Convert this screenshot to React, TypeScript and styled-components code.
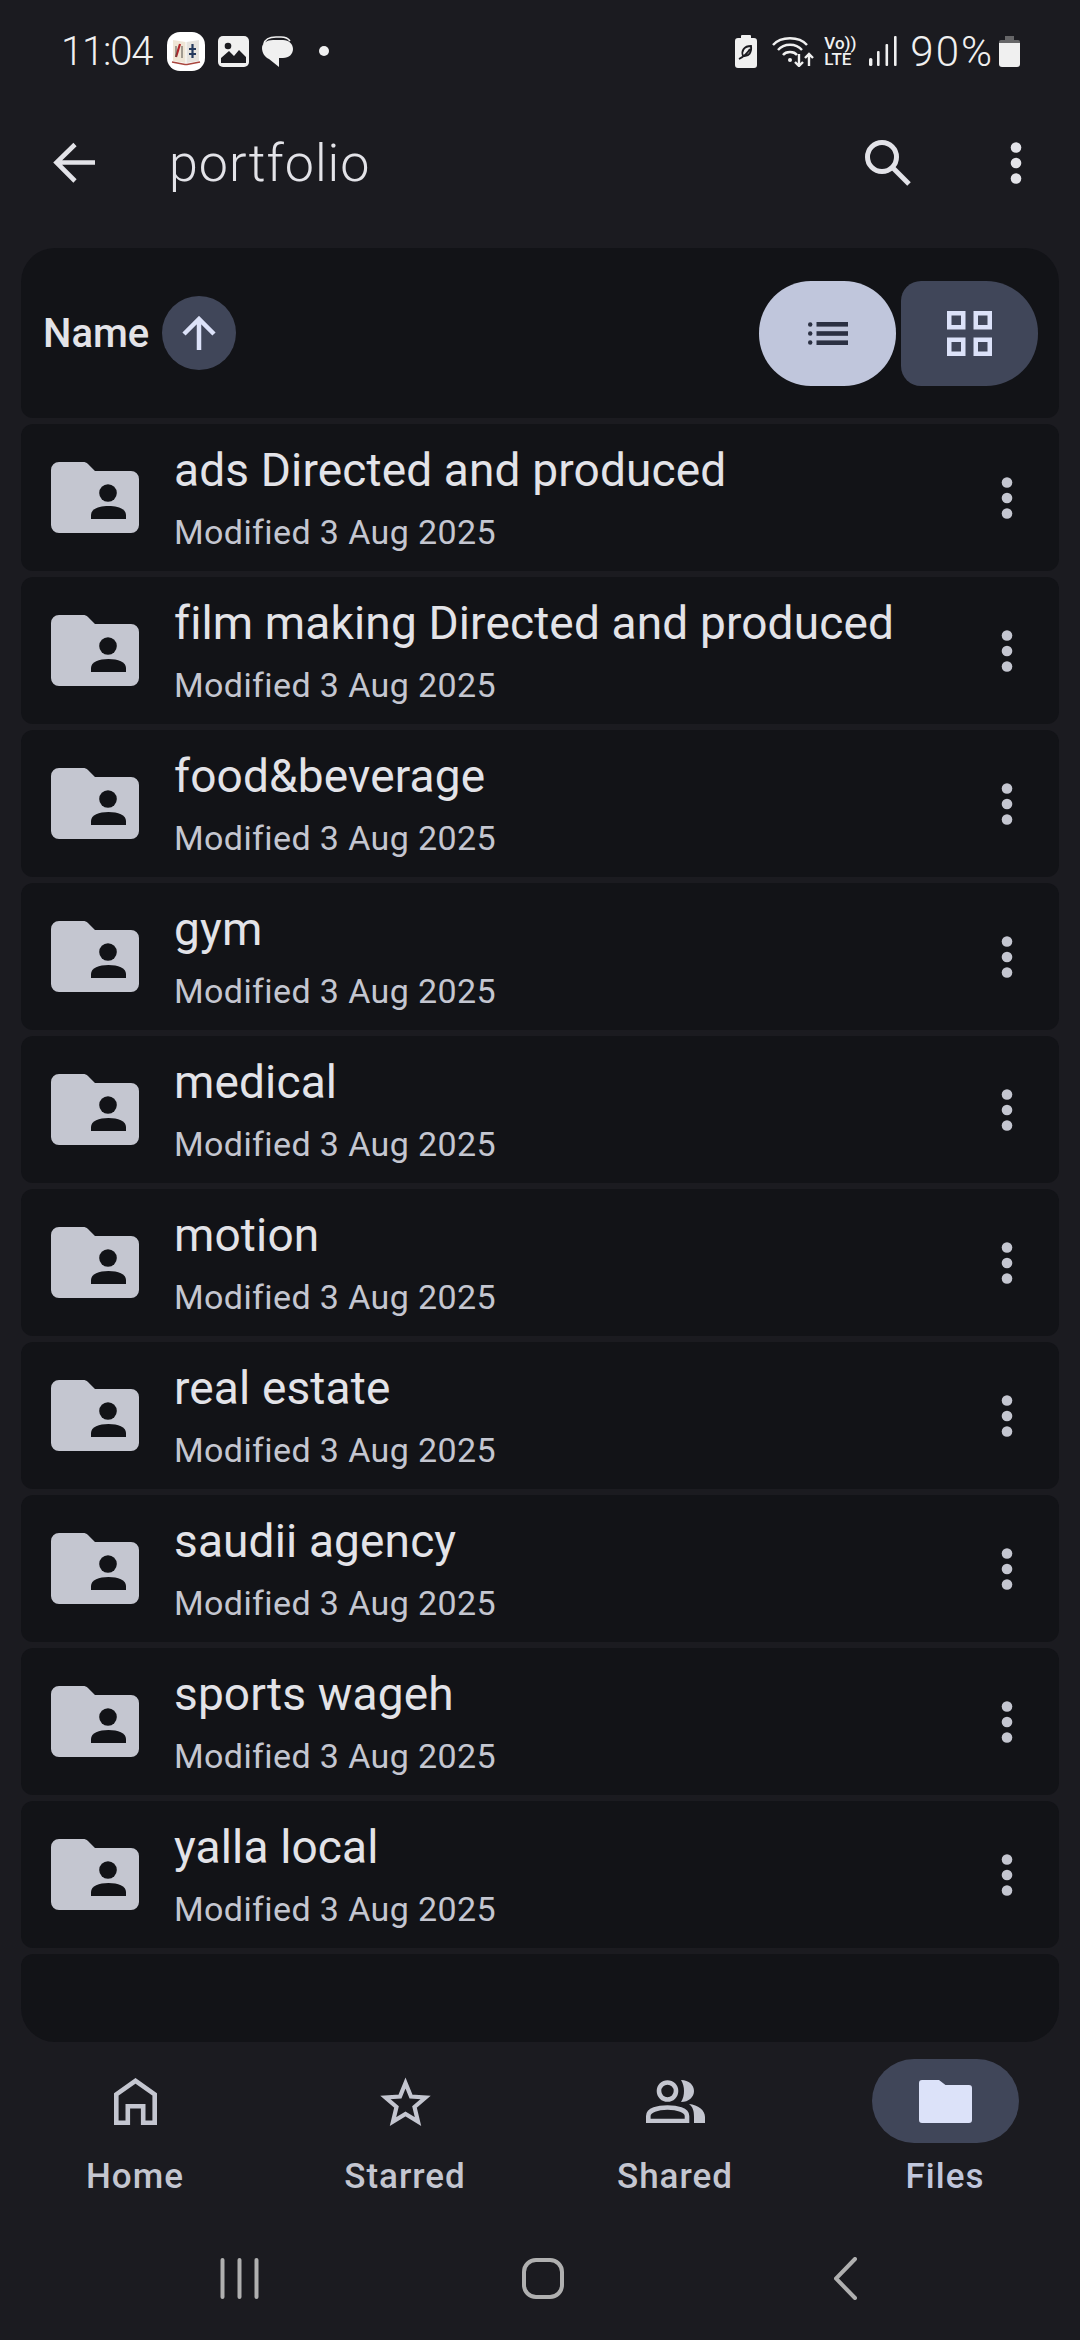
import styled, { createGlobalStyle } from "styled-components";

const GlobalStyle = createGlobalStyle`
	html, body {
		margin: 0;
		padding: 0;
		background: #1b1b20;
	}
	* {
		box-sizing: border-box;
	}
`;

const folders = [
	"ads Directed and produced",
	"film making Directed and produced",
	"food&beverage",
	"gym",
	"medical",
	"motion",
	"real estate",
	"saudii agency",
	"sports wageh",
	"yalla local",
];

const BackIcon = () => (
	<svg width="42" height="42" viewBox="0 0 42 42" fill="none" stroke="#e3e3e8" strokeWidth="4.6">
		<path d="M42 20.500H4M22 2.500 3.500 20.500 22 39" />
	</svg>
);

const SearchIcon = () => (
	<svg width="46" height="46" viewBox="0 0 46 46" fill="none" stroke="#e3e3e8" strokeWidth="5">
		<circle cx="17" cy="17" r="14.500" />
		<path d="M27.500 27.500 44 44" />
	</svg>
);

const KebabIcon = ({ color }: { color: string }) => (
	<svg width="12" height="42" viewBox="0 0 12 42" fill={color}>
		<circle cx="6" cy="5.500" r="5.300" />
		<circle cx="6" cy="21" r="5.300" />
		<circle cx="6" cy="36.500" r="5.300" />
	</svg>
);

const SharedFolderIcon = () => (
	<svg width="88" height="71" viewBox="0 0 88 71">
		<path
			d="M8 0H32C34 0 35.500 .6 37 2L44 9H80A8 8 0 0 1 88 17V63A8 8 0 0 1 80 71H8A8 8 0 0 1 0 63V8A8 8 0 0 1 8 0Z"
			fill="#c4c6d0"
		/>
		<circle cx="57" cy="31" r="8.800" fill="#121317" />
		<path d="M40 57V53C40 47 48 44 57.500 44S75 47 75 53V57Z" fill="#121317" />
	</svg>
);

const SortArrowIcon = () => (
	<svg width="34" height="34" viewBox="0 0 34 34" fill="none" stroke="#dce2f9" strokeWidth="4.500">
		<path d="M17 34V3M2 18 17 3 32 18" />
	</svg>
);

const ListIcon = () => (
	<svg width="40" height="23" viewBox="0 0 40 23" fill="#2b3042">
		<circle cx="2.200" cy="2.500" r="2.200" />
		<circle cx="2.200" cy="11.500" r="2.200" />
		<circle cx="2.200" cy="20.500" r="2.200" />
		<rect x="8.500" y="0" width="31.500" height="4.600" />
		<rect x="8.500" y="9.200" width="31.500" height="4.600" />
		<rect x="8.500" y="18.400" width="31.500" height="4.600" />
	</svg>
);

const GridIcon = () => (
	<svg width="45" height="45" viewBox="0 0 45 45" fill="none" stroke="#dce2f9" strokeWidth="4.500">
		<rect x="2.250" y="2.250" width="14" height="14" />
		<rect x="28.750" y="2.250" width="14" height="14" />
		<rect x="2.250" y="28.750" width="14" height="14" />
		<rect x="28.750" y="28.750" width="14" height="14" />
	</svg>
);

const HomeIcon = () => (
	<svg width="43" height="47" viewBox="0 0 43 47" fill="none" stroke="#c4c6d0" strokeWidth="4.600">
		<path d="M2.300 44.700V16.500L21.500 2.800 40.700 16.500V44.700H29.200V28.300H13.800V44.700Z" />
	</svg>
);

const StarIcon = () => (
	<svg width="51" height="49" viewBox="0 0 51 49" fill="none" stroke="#c4c6d0" strokeWidth="4.200">
		<path d="M25.500 6 31 19.500 45.500 20.500 34.500 30 38 44.500 25.500 37 13 44.500 16.500 30 5.500 20.500 20 19.500Z" />
	</svg>
);

const SharedIcon = () => (
	<svg width="59" height="43" viewBox="0 0 59 43" fill="none">
		<circle cx="21.500" cy="11" r="8.500" stroke="#c4c6d0" strokeWidth="4.600" />
		<path d="M2.300 41V36C2.300 30 12 27.500 21.500 27.500S41 30 41 36V41Z" stroke="#c4c6d0" strokeWidth="4.600" />
		<path d="M35 0C43 0 48 5 48 11S43 22 35 22C39 16 39 6 35 0Z" fill="#c4c6d0" />
		<path d="M43 24C52 25 59 30 59 37V43H48V37C48 31 47 27 43 24Z" fill="#c4c6d0" />
	</svg>
);

const FilesIcon = () => (
	<svg width="53" height="43" viewBox="0 0 53 43" fill="#dce2f9">
		<path d="M3 0H20L26.500 5H50A3 3 0 0 1 53 8V40A3 3 0 0 1 50 43H3A3 3 0 0 1 0 40V3A3 3 0 0 1 3 0Z" />
	</svg>
);

const AppBadgeIcon = () => (
	<svg width="38" height="39" viewBox="0 0 38 39">
		<rect width="38" height="39" rx="13" fill="#ffffff" />
		<path d="M6 8 18.500 10V31L6 29Z" fill="#efe6d6" />
		<path d="M32 8 19.500 10V31L32 29Z" fill="#e6e3de" />
		<path d="M13 12 9 25" stroke="#b3262b" strokeWidth="2.200" />
		<path d="M9 14V25M15 14V26" stroke="#55504a" strokeWidth="1" />
		<path d="M25.500 12V26M22 17H29M22 22H29" stroke="#253a5e" strokeWidth="2.200" />
		<path d="M5 30 18 32.500H20L33 30" stroke="#a9463d" strokeWidth="1.500" fill="none" />
	</svg>
);

const GalleryIcon = () => (
	<svg width="31" height="31" viewBox="0 0 31 31">
		<rect width="31" height="31" rx="5" fill="#f0f0f0" />
		<circle cx="10" cy="10" r="3.300" fill="#1b1b20" />
		<path d="M3 27V22L11 15 16 20 21 14 28 21V27Z" fill="#1b1b20" />
	</svg>
);

const ChatIcon = () => (
	<svg width="31" height="31" viewBox="0 0 31 31">
		<path d="M2 8C3 3 8 1 14 1H19C23 1 26 2 28 5" fill="none" stroke="#f0f0f0" strokeWidth="1.600" />
		<path d="M0 12C0 7 5 4 11 4H21C27 4 31 8 31 13S27 22 21 22H17V31L7 23C3 21 0 17 0 12Z" fill="#f0f0f0" />
	</svg>
);

const LeafBatteryIcon = () => (
	<svg width="22" height="33" viewBox="0 0 22 33">
		<path d="M7 0H15A1 1 0 0 1 16 1V3H19A3 3 0 0 1 22 6V30A3 3 0 0 1 19 33H3A3 3 0 0 1 0 30V6A3 3 0 0 1 3 3H6V1A1 1 0 0 1 7 0Z" fill="#f0f0f0" />
		<path d="M4 24C8 22 12 19 15 14M8 21C6 16 9 11 16 11 17 17 14 22 8 21Z" fill="none" stroke="#1b1b20" strokeWidth="1.800" />
	</svg>
);

const WifiIcon = () => (
	<svg width="42" height="32" viewBox="0 0 42 32" fill="none" stroke="#f0f0f0" strokeWidth="2.400">
		<path d="M1 10C9 1 27 1 35 10M6 15C12 8 24 8 30 15M11 20C14 16 22 16 25 20" />
		<circle cx="18" cy="25" r="2" fill="#f0f0f0" stroke="none" />
		<path d="M27 19V31M23 27 27 31 31 27M37 31V19M33 23 37 19 41 23" />
	</svg>
);

const SignalIcon = () => (
	<svg width="28" height="30" viewBox="0 0 28 30" fill="#f0f0f0">
		<rect x="0" y="22" width="3.400" height="8" rx="1.500" />
		<rect x="8" y="15" width="2.600" height="15" rx="1" />
		<rect x="16.500" y="8" width="2.600" height="22" rx="1" />
		<rect x="25" y="0" width="2.600" height="30" rx="1" />
	</svg>
);

const BatteryIcon = () => (
	<svg width="21" height="31" viewBox="0 0 21 31">
		<path d="M6 0H15V4H6Z" fill="#666668" />
		<path d="M2 4H19A2 2 0 0 1 21 6V7H0V6A2 2 0 0 1 2 4Z" fill="#666668" />
		<path d="M0 7H21V28A3 3 0 0 1 18 31H3A3 3 0 0 1 0 28Z" fill="#f0f0f0" />
	</svg>
);

const RecentsIcon = () => (
	<svg width="39" height="41" viewBox="0 0 39 41" fill="none" stroke="#b0b0b0" strokeWidth="4" strokeLinecap="round">
		<path d="M2.500 2V39M19.500 2V39M36.500 2V39" />
	</svg>
);

const HomeSquareIcon = () => (
	<svg width="42" height="41" viewBox="0 0 42 41" fill="none" stroke="#b0b0b0" strokeWidth="4">
		<rect x="2" y="2" width="38" height="37" rx="12" />
	</svg>
);

const BackChevronIcon = () => (
	<svg width="23" height="43" viewBox="0 0 23 43" fill="none" stroke="#b0b0b0" strokeWidth="4" strokeLinecap="round">
		<path d="M21 2 2 21.500 21 41" />
	</svg>
);

export default function App() {
	return (
		<StyledPage>
			<GlobalStyle />
			<StyledStatusBar>
				<StyledStatusLeft>
					<StyledClock>11:04</StyledClock>
					<AppBadgeIcon />
					<GalleryIcon />
					<ChatIcon />
					<StyledNotificationDot />
				</StyledStatusLeft>
				<StyledStatusRight>
					<LeafBatteryIcon />
					<WifiIcon />
					<StyledVolte>
						<span>Vo))</span>
						<span>LTE</span>
					</StyledVolte>
					<SignalIcon />
					<StyledBatteryText>90%</StyledBatteryText>
					<BatteryIcon />
				</StyledStatusRight>
			</StyledStatusBar>

			<StyledToolbar>
				<BackIcon />
				<StyledToolbarTitle>portfolio</StyledToolbarTitle>
				<SearchIcon />
				<KebabIcon color="#e3e3e8" />
			</StyledToolbar>

			<StyledList>
				<StyledListHeader>
					<StyledSortLabel>Name</StyledSortLabel>
					<StyledSortButton>
						<SortArrowIcon />
					</StyledSortButton>
					<StyledToggleGroup>
						<StyledToggle $active>
							<ListIcon />
						</StyledToggle>
						<StyledToggle>
							<GridIcon />
						</StyledToggle>
					</StyledToggleGroup>
				</StyledListHeader>

				{folders.map((name) => (
					<StyledRow key={name}>
						<SharedFolderIcon />
						<StyledRowText>
							<StyledRowTitle>{name}</StyledRowTitle>
							<StyledRowMeta>Modified 3 Aug 2025</StyledRowMeta>
						</StyledRowText>
						<KebabIcon color="#c4c6d0" />
					</StyledRow>
				))}

				<StyledListFooter />
			</StyledList>

			<StyledBottomNav>
				<StyledNavItem>
					<StyledNavIcon>
						<HomeIcon />
					</StyledNavIcon>
					<StyledNavLabel>Home</StyledNavLabel>
				</StyledNavItem>
				<StyledNavItem>
					<StyledNavIcon>
						<StarIcon />
					</StyledNavIcon>
					<StyledNavLabel>Starred</StyledNavLabel>
				</StyledNavItem>
				<StyledNavItem>
					<StyledNavIcon>
						<SharedIcon />
					</StyledNavIcon>
					<StyledNavLabel>Shared</StyledNavLabel>
				</StyledNavItem>
				<StyledNavItem>
					<StyledNavIcon $active>
						<FilesIcon />
					</StyledNavIcon>
					<StyledNavLabel $active>Files</StyledNavLabel>
				</StyledNavItem>
			</StyledBottomNav>

			<StyledSystemNav>
				<RecentsIcon />
				<HomeSquareIcon />
				<BackChevronIcon />
			</StyledSystemNav>
		</StyledPage>
	);
}

const StyledPage = styled.div`
	width: 1080px;
	height: 2340px;
	overflow: hidden;
	display: flex;
	flex-direction: column;
	background: #1b1b20;
	font-family: Roboto, "Liberation Sans", sans-serif;
`;

const StyledStatusBar = styled.div`
	height: 102px;
	padding: 0 60px 0 61px;
	display: flex;
	align-items: center;
	justify-content: space-between;
`;

const StyledStatusLeft = styled.div`
	display: flex;
	align-items: center;
	gap: 13px;
`;

const StyledStatusRight = styled.div`
	display: flex;
	align-items: center;
	gap: 10px;
	& > svg:first-child {
		margin-right: 5px;
	}
`;

const StyledClock = styled.span`
	font-size: 40px;
	font-weight: 300;
	color: #f0f0f0;
	letter-spacing: -1.2px;
	margin-right: 2px;
`;

const StyledNotificationDot = styled.span`
	width: 10px;
	height: 10px;
	margin-left: 13px;
	border-radius: 50%;
	background: #f0f0f0;
`;

const StyledVolte = styled.div`
	display: flex;
	flex-direction: column;
	width: 32px;
	margin-right: 3px;
	font-size: 17px;
	font-weight: 500;
	line-height: 16px;
	color: #f0f0f0;
`;

const StyledBatteryText = styled.span`
	margin-left: 3px;
	margin-right: -5px;
	font-size: 42px;
	font-weight: 300;
	letter-spacing: 2px;
	color: #f0f0f0;
`;

const StyledToolbar = styled.div`
	height: 122px;
	margin-bottom: 24px;
	padding: 0 58px 0 53px;
	display: flex;
	align-items: center;
`;

const StyledToolbarTitle = styled.h1`
	flex: 1;
	margin: 0 0 0 74px;
	font-size: 52px;
	font-weight: 300;
	letter-spacing: 1px;
	color: #e3e3e8;
	& + svg {
		margin-right: 99px;
	}
`;

const StyledList = styled.div`
	margin: 0 21px;
	display: flex;
	flex-direction: column;
	gap: 6px;
`;

const StyledListHeader = styled.div`
	height: 170px;
	padding: 0 21px 0 22px;
	display: flex;
	align-items: center;
	background: #121317;
	border-radius: 34px 34px 12px 12px;
`;

const StyledSortLabel = styled.span`
	width: 107px;
	font-size: 40px;
	font-weight: 500;
	color: #e3e3e8;
`;

const StyledSortButton = styled.div`
	width: 74px;
	height: 74px;
	margin-left: 12px;
	display: flex;
	align-items: center;
	justify-content: center;
	border-radius: 50%;
	background: #404659;
`;

const StyledToggleGroup = styled.div`
	margin-left: auto;
	display: flex;
	gap: 5px;
`;

const StyledToggle = styled.div<{ $active?: boolean }>`
	width: 137px;
	height: 105px;
	display: flex;
	align-items: center;
	justify-content: center;
	background: ${(p) => (p.$active ? "#c0c6dc" : "#404659")};
	border-radius: ${(p) => (p.$active ? "52px" : "20px 52px 52px 20px")};
`;

const StyledRow = styled.div`
	height: 147px;
	padding: 0 46px 0 30px;
	display: flex;
	align-items: center;
	background: #121317;
	border-radius: 12px;
`;

const StyledRowText = styled.div`
	flex: 1;
	margin-left: 35px;
	display: flex;
	flex-direction: column;
`;

const StyledRowTitle = styled.div`
	font-size: 46px;
	line-height: 56px;
	letter-spacing: 0.15px;
	color: #e3e3e8;
`;

const StyledRowMeta = styled.div`
	margin-top: 12px;
	font-size: 34px;
	line-height: 44px;
	letter-spacing: 0.4px;
	color: #c4c6d0;
`;

const StyledListFooter = styled.div`
	height: 88px;
	background: #121317;
	border-radius: 12px 12px 34px 34px;
`;

const StyledBottomNav = styled.nav`
	margin-top: 17px;
	display: grid;
	grid-template-columns: repeat(4, 270px);
`;

const StyledNavItem = styled.div`
	display: flex;
	flex-direction: column;
	align-items: center;
`;

const StyledNavIcon = styled.div<{ $active?: boolean }>`
	width: 147px;
	height: 84px;
	display: flex;
	align-items: center;
	justify-content: center;
	border-radius: 42px;
	background: ${(p) => (p.$active ? "#404659" : "transparent")};
`;

const StyledNavLabel = styled.span<{ $active?: boolean }>`
	margin-top: 12px;
	font-size: 35px;
	line-height: 44px;
	font-weight: 500;
	letter-spacing: 1px;
	color: ${(p) => (p.$active ? "#c0c6dc" : "#c4c6d0")};
`;

const StyledSystemNav = styled.div`
	margin-top: 58px;
	padding-left: 88px;
	display: grid;
	grid-template-columns: repeat(3, 303px);
	align-items: center;
	justify-items: center;
`;
